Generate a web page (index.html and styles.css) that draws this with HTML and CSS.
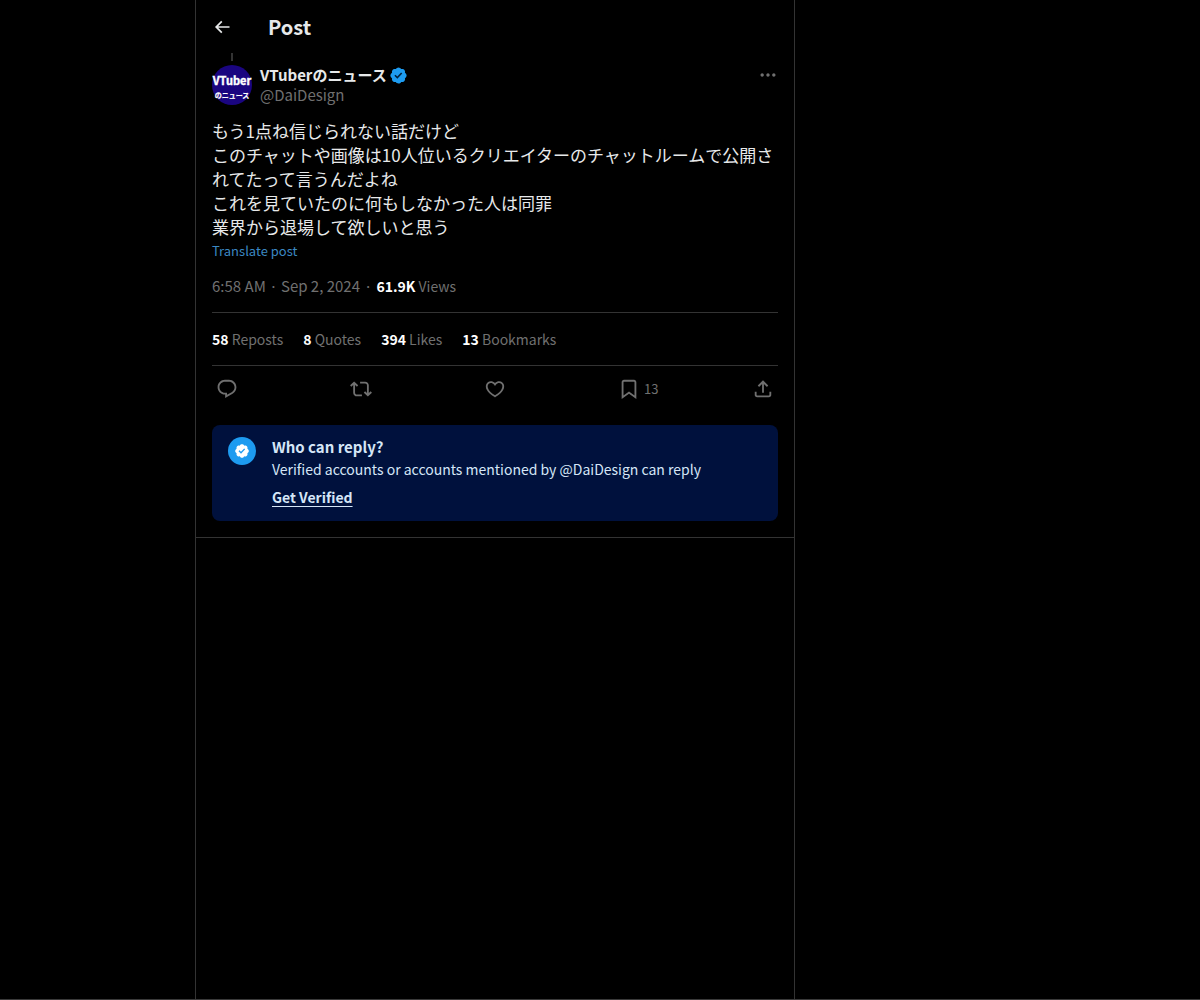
FILE: index.html
```html
<!DOCTYPE html>
<html lang="en">
<head>
    <meta charset="UTF-8">
    <meta name="viewport" content="width=device-width, initial-scale=1.0">
    <title>Post</title>
    <link rel="stylesheet" href="styles.css">
</head>
<body>
    <main class="column">
        <header class="top-bar">
            <button type="button" class="icon-button back" aria-label="Back">
                <svg viewBox="0 0 24 24"><path d="M7.414 13l5.043 5.04-1.414 1.42L3.586 12l7.457-7.46 1.414 1.42L7.414 11H21v2H7.414z"/></svg>
            </button>
            <h1>Post</h1>
        </header>

        <article class="post">
            <div class="thread-line"></div>
            <div class="author">
                <a href="#" class="avatar" aria-label="DaiDesign">
                    <svg viewBox="0 0 40 40">
                        <circle cx="20" cy="20" r="20" fill="#1a0580"/>
                        <text class="avatar-latin" x="20" y="20" text-anchor="middle">VTuber</text>
                        <text class="avatar-kana" x="20" y="33" text-anchor="middle">のニュース</text>
                    </svg>
                </a>
                <div class="names">
                    <a href="#" class="name">VTuberのニュース
                        <svg class="verified" viewBox="0 0 22 22"><path d="M20.396 11c-.018-.646-.215-1.275-.57-1.816-.354-.54-.852-.972-1.438-1.246.223-.607.27-1.264.14-1.897-.131-.634-.437-1.218-.882-1.687-.47-.445-1.053-.75-1.687-.882-.633-.13-1.29-.083-1.897.14-.273-.587-.704-1.086-1.245-1.44S11.647 1.62 11 1.604c-.646.017-1.273.213-1.813.568s-.969.854-1.24 1.44c-.608-.223-1.267-.272-1.902-.14-.635.13-1.22.436-1.69.882-.445.47-.749 1.055-.878 1.688-.13.633-.08 1.29.144 1.896-.587.274-1.087.705-1.443 1.245-.356.54-.555 1.17-.574 1.817.02.647.218 1.276.574 1.817.356.54.856.972 1.443 1.245-.224.606-.274 1.263-.144 1.896.13.634.433 1.218.877 1.688.47.443 1.054.747 1.687.878.633.132 1.29.084 1.897-.136.274.586.705 1.084 1.246 1.439.54.354 1.17.551 1.816.569.647-.016 1.276-.213 1.817-.567s.972-.854 1.245-1.44c.604.239 1.266.296 1.903.164.636-.132 1.22-.447 1.68-.907.46-.46.776-1.044.908-1.681s.075-1.299-.165-1.903c.586-.274 1.084-.705 1.439-1.246.354-.54.551-1.17.569-1.816z"/><path class="tick" d="M9.662 14.85l-3.429-3.428 1.293-1.302 2.072 2.072 4.4-4.794 1.347 1.246z"/></svg>
                    </a>
                    <a href="#" class="handle">@DaiDesign</a>
                </div>
                <button type="button" class="icon-button more" aria-label="More">
                    <svg viewBox="0 0 24 24"><path d="M3 12c0-1.1.9-2 2-2s2 .9 2 2-.9 2-2 2-2-.9-2-2zm9 2c1.1 0 2-.9 2-2s-.9-2-2-2-2 .9-2 2 .9 2 2 2zm7 0c1.1 0 2-.9 2-2s-.9-2-2-2-2 .9-2 2 .9 2 2 2z"/></svg>
                </button>
            </div>

            <p class="text" lang="ja">もう1点ね信じられない話だけど<br>このチャットや画像は10人位いるクリエイターのチャットルームで公開されてたって言うんだよね<br>これを見ていたのに何もしなかった人は同罪<br>業界から退場して欲しいと思う</p>
            <button type="button" class="translate">Translate post</button>

            <div class="meta">
                <a href="#">6:58 AM · Sep 2, 2024</a>
                <span>·</span>
                <span class="views"><strong>61.9K</strong> Views</span>
            </div>

            <div class="stats">
                <a href="#"><strong>58</strong> Reposts</a>
                <a href="#"><strong>8</strong> Quotes</a>
                <a href="#"><strong>394</strong> Likes</a>
                <a href="#"><strong>13</strong> Bookmarks</a>
            </div>

            <div class="actions">
                <button type="button" class="icon-button" aria-label="Reply">
                    <svg viewBox="0 0 24 24"><path d="M1.751 10c0-4.42 3.584-8 8.005-8h4.366c4.49 0 8.129 3.64 8.129 8.13 0 2.96-1.607 5.68-4.196 7.11l-8.054 4.46v-3.69h-.067c-4.49.1-8.183-3.51-8.183-8.01zm8.005-6c-3.317 0-6.005 2.69-6.005 6 0 3.37 2.77 6.08 6.138 6.01l.351-.01h1.761v2.3l5.087-2.81c1.951-1.08 3.163-3.13 3.163-5.36 0-3.39-2.744-6.13-6.129-6.13H9.756z"/></svg>
                </button>
                <button type="button" class="icon-button" aria-label="Repost">
                    <svg viewBox="0 0 24 24"><path d="M4.5 3.88l4.432 4.14-1.364 1.46L5.5 7.55V16c0 1.1.896 2 2 2H13v2H7.5c-2.209 0-4-1.79-4-4V7.55L1.432 9.48.068 8.02 4.5 3.88zM16.5 6H11V4h5.5c2.209 0 4 1.79 4 4v8.45l2.068-1.93 1.364 1.46-4.432 4.14-4.432-4.14 1.364-1.46 2.068 1.93V8c0-1.1-.896-2-2-2z"/></svg>
                </button>
                <button type="button" class="icon-button" aria-label="Like">
                    <svg viewBox="0 0 24 24"><path d="M16.697 5.5c-1.222-.06-2.679.51-3.89 2.16l-.805 1.09-.806-1.09C9.984 6.01 8.526 5.44 7.304 5.5c-1.243.07-2.349.78-2.91 1.91-.552 1.12-.633 2.78.479 4.82 1.074 1.97 3.257 4.27 7.129 6.61 3.87-2.34 6.052-4.64 7.126-6.61 1.111-2.04 1.03-3.7.477-4.82-.561-1.13-1.666-1.84-2.908-1.91zm4.187 7.69c-1.351 2.48-4.001 5.12-8.379 7.67l-.503.3-.504-.3c-4.379-2.55-7.029-5.19-8.382-7.67-1.36-2.5-1.41-4.86-.514-6.67.887-1.79 2.647-2.91 4.601-3.01 1.651-.09 3.368.56 4.798 2.01 1.429-1.45 3.146-2.1 4.796-2.01 1.954.1 3.714 1.22 4.601 3.01.896 1.81.846 4.17-.514 6.67z"/></svg>
                </button>
                <button type="button" class="icon-button" aria-label="Bookmark, 13">
                    <svg viewBox="0 0 24 24"><path d="M4 4.5C4 3.12 5.119 2 6.5 2h11C18.881 2 20 3.12 20 4.5v18.44l-8-5.71-8 5.71V4.5zM6.5 4c-.276 0-.5.22-.5.5v14.56l6-4.29 6 4.29V4.5c0-.28-.224-.5-.5-.5h-11z"/></svg>
                    <span>13</span>
                </button>
                <button type="button" class="icon-button" aria-label="Share">
                    <svg viewBox="0 0 24 24"><path d="M12 2.59l5.7 5.7-1.41 1.42L13 6.41V16h-2V6.41l-3.3 3.3-1.41-1.42L12 2.59zM21 15l-.02 3.51c0 1.38-1.12 2.49-2.5 2.49H5.5C4.11 21 3 19.88 3 18.5V15h2v3.5c0 .28.22.5.5.5h12.98c.28 0 .5-.22.5-.5L19 15h2z"/></svg>
                </button>
            </div>

            <section class="reply-info">
                <div class="reply-badge">
                    <svg viewBox="0 0 22 22"><path d="M20.396 11c-.018-.646-.215-1.275-.57-1.816-.354-.54-.852-.972-1.438-1.246.223-.607.27-1.264.14-1.897-.131-.634-.437-1.218-.882-1.687-.47-.445-1.053-.75-1.687-.882-.633-.13-1.29-.083-1.897.14-.273-.587-.704-1.086-1.245-1.44S11.647 1.62 11 1.604c-.646.017-1.273.213-1.813.568s-.969.854-1.24 1.44c-.608-.223-1.267-.272-1.902-.14-.635.13-1.22.436-1.69.882-.445.47-.749 1.055-.878 1.688-.13.633-.08 1.29.144 1.896-.587.274-1.087.705-1.443 1.245-.356.54-.555 1.17-.574 1.817.02.647.218 1.276.574 1.817.356.54.856.972 1.443 1.245-.224.606-.274 1.263-.144 1.896.13.634.433 1.218.877 1.688.47.443 1.054.747 1.687.878.633.132 1.29.084 1.897-.136.274.586.705 1.084 1.246 1.439.54.354 1.17.551 1.816.569.647-.016 1.276-.213 1.817-.567s.972-.854 1.245-1.44c.604.239 1.266.296 1.903.164.636-.132 1.22-.447 1.68-.907.46-.46.776-1.044.908-1.681s.075-1.299-.165-1.903c.586-.274 1.084-.705 1.439-1.246.354-.54.551-1.17.569-1.816zM9.662 14.85l-3.429-3.428 1.293-1.302 2.072 2.072 4.4-4.794 1.347 1.246z"/></svg>
                </div>
                <div class="reply-text">
                    <h2>Who can reply?</h2>
                    <p>Verified accounts or accounts mentioned by @DaiDesign can reply</p>
                    <a href="#">Get Verified</a>
                </div>
            </section>
        </article>
    </main>
</body>
</html>
```
FILE: styles.css
```css
* {
    box-sizing: border-box;
}
body {
    display: grid;
    grid-template-columns: 195px minmax(0, 600px) 1fr;
    min-height: 100vh;
    margin: 0;
    border-bottom: 1px solid #3a3a3a;
    background-color: #000;
    color: #e7e9ea;
    font-family: "Noto Sans CJK JP", "Noto Sans", sans-serif;
    font-size: 15px;
    line-height: 20px;
}
h1, h2, p {
    margin: 0;
}
a {
    color: inherit;
    text-decoration: none;
}
button {
    padding: 0;
    border: none;
    background: none;
    color: inherit;
    font: inherit;
    cursor: pointer;
}
svg {
    display: block;
    fill: currentColor;
}
strong {
    color: #fff;
}
.column {
    grid-column: 2;
    border-left: 1px solid #333;
    border-right: 1px solid #333;
}
.top-bar {
    display: flex;
    align-items: center;
    gap: 36px;
    height: 53px;
    padding: 0 16px;
}
.top-bar h1 {
    font-size: 20px;
    line-height: 24px;
}
.icon-button {
    display: flex;
    align-items: center;
}
.icon-button svg {
    flex: none;
    width: 22px;
    height: 22px;
}
.icon-button.back svg, .icon-button.more svg {
    width: 20px;
    height: 20px;
}
.post {
    padding: 0 16px 16px;
    border-bottom: 1px solid #333;
}
.thread-line {
    width: 2px;
    height: 8px;
    margin: 0 0 4px 19px;
    background-color: #333;
}
.author {
    display: flex;
    align-items: flex-start;
    gap: 8px;
}
.avatar {
    width: 40px;
    height: 40px;
}
.avatar text {
    fill: #fff;
    stroke: #fff;
    font-weight: 700;
}
.avatar-latin {
    font-size: 11px;
    stroke-width: 0.4px;
}
.avatar-kana {
    font-size: 7px;
    stroke-width: 0.2px;
}
.names {
    display: flex;
    flex: 1;
    flex-direction: column;
    align-items: flex-start;
}
.name {
    display: flex;
    align-items: center;
    gap: 2px;
    font-weight: 700;
}
.verified {
    width: 19px;
    height: 19px;
    color: #1d9bf0;
}
.tick {
    fill: #00203c;
}
.handle, .more, .meta, .stats, .actions {
    color: #707070;
}
.text {
    margin-top: 14px;
    font-size: 17px;
    line-height: 24px;
}
.translate {
    display: block;
    margin-top: 2px;
    color: #3b88c3;
    font-size: 13px;
    line-height: 20px;
}
.meta {
    display: flex;
    gap: 4px;
    padding: 15px 0 16px;
}
.views, .stats {
    font-size: 14px;
}
.stats {
    display: flex;
    gap: 20px;
    padding: 16px 0;
    border-top: 1px solid #333;
    border-bottom: 1px solid #333;
}
.actions {
    display: grid;
    grid-template-columns: repeat(4, 1fr) 22px;
    align-items: center;
    height: 46px;
    padding: 0 4px;
}
.actions span {
    margin-left: 4px;
    font-size: 13px;
}
.reply-info {
    display: flex;
    gap: 16px;
    margin-top: 13px;
    padding: 12px 16px 14px;
    border-radius: 8px;
    background-color: #00113d;
    color: #d5e6f7;
}
.reply-badge {
    display: flex;
    flex: none;
    align-items: center;
    justify-content: center;
    width: 28px;
    height: 28px;
    border-radius: 50%;
    background-color: #1d9bf0;
    color: #fff;
}
.reply-badge svg {
    width: 16px;
    height: 16px;
}
.reply-text h2 {
    font-size: 15px;
    line-height: 20px;
}
.reply-text p {
    margin: 2px 0 8px;
    font-size: 14px;
}
.reply-text a {
    display: inline-block;
    font-size: 14px;
    font-weight: 700;
    text-decoration: underline;
    text-underline-offset: 3px;
}
```
